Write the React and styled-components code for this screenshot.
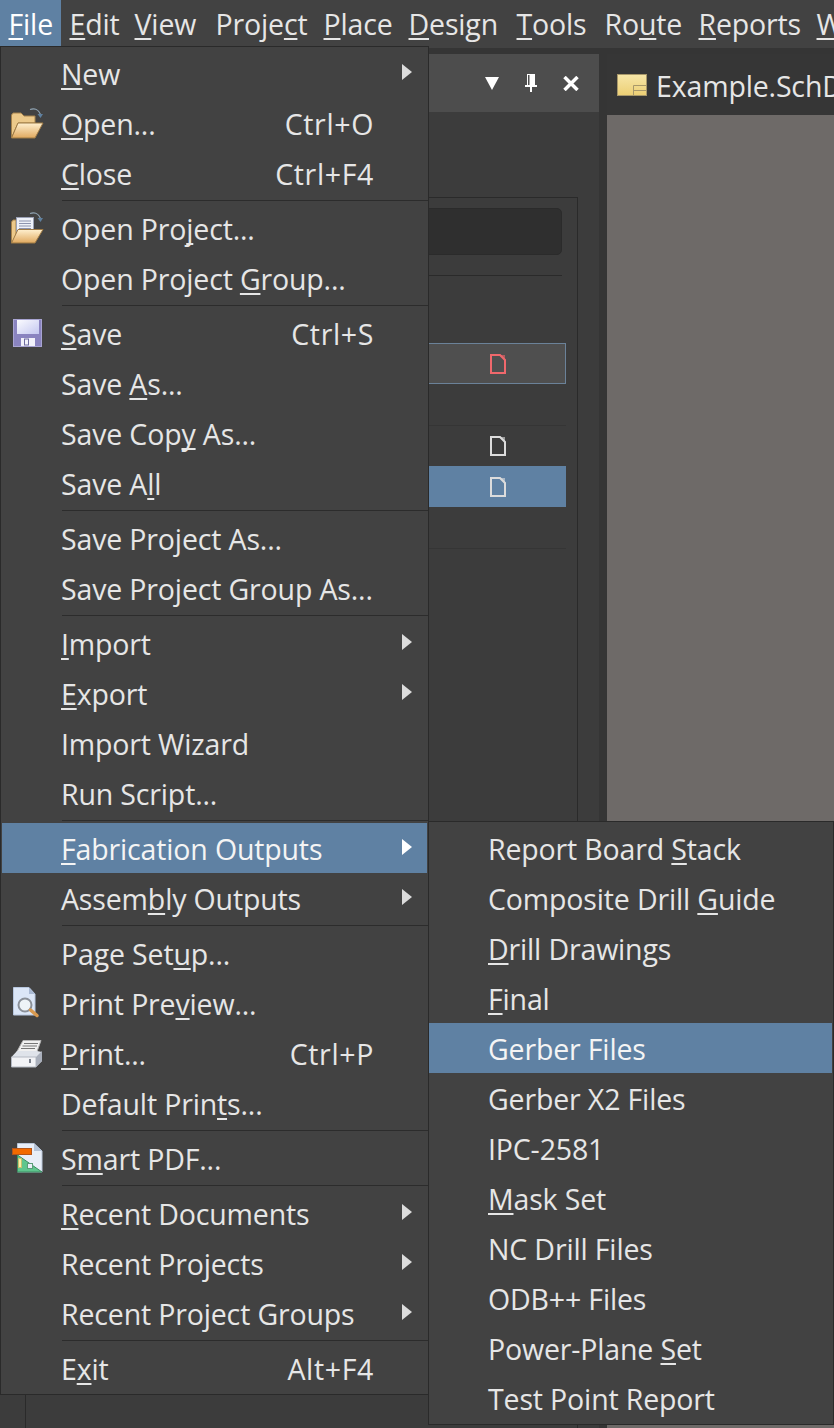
import React from "react";
import styled, { createGlobalStyle } from "styled-components";

const Global = createGlobalStyle`
  html, body { margin: 0; padding: 0; background: #353535; }
  body { width: 834px; height: 1428px; overflow: hidden; }
`;

const Frame = styled.div`
  position: relative; width: 834px; height: 1428px; overflow: hidden;
  display: flex; flex-direction: column; background: #353535;
  font-family: "Open Sans", "Noto Sans", sans-serif; font-size: 28.5px; letter-spacing: -0.15px; color: #e6e6e6;
  u { text-decoration: underline; text-decoration-thickness: 1.5px; text-underline-offset: 3px; text-decoration-skip-ink: none; }
`;
const MenuBar = styled.div`
  display: flex; height: 48px; flex: none; background: #424242; white-space: nowrap;
`;
const BarItem = styled.div`
  height: 46px; box-sizing: border-box; padding: 3px 0 0 8.5px; width: ${p => p.$w}px; flex: none;
  background: ${p => (p.$active ? "#5f81a3" : "transparent")}; line-height: 42px; color: ${p => (p.$active ? "#fff" : "#e6e6e6")};
`;
const Work = styled.div`
  flex: 1; display: flex; padding-top: 6px; min-height: 0;
`;
const Panel = styled.div`
  width: 599px; flex: none; display: flex; flex-direction: column; background: #3c3c3c;
`;
const PanelHead = styled.div`
  height: 58px; flex: none; background: #4d4d4d; display: flex; align-items: center; justify-content: flex-end; padding-right: 20px; gap: 26px;
  svg { display: block; }
`;
const PanelBody = styled.div`
  flex: 1; padding: 85px 21px 0 25px; display: flex; min-height: 0;
`;
const Box = styled.div`
  flex: 1; box-sizing: border-box; border: 1px solid #2a2a2a; border-bottom: 0; padding: 10px 11px 0 0; display: flex; flex-direction: column;
`;
const SearchField = styled.div`
  height: 47px; flex: none; box-sizing: border-box; margin-right: 4px; background: #2f2f2f; border: 1px solid #2b2b2b; border-radius: 5px;
`;
const Rule = styled.div`
  height: 1px; flex: none; margin: 20px 4px 67px 0; background: #2a2a2a;
`;
const TreeRow = styled.div`
  height: ${p => p.$h}px; box-sizing: border-box; flex: none; display: flex; align-items: center; justify-content: flex-end; padding-right: ${p => (p.$framed ? 59 : 60)}px;
  background: ${p => p.$bg || "transparent"}; border: ${p => (p.$framed ? "1px solid #6b8299" : "0")};
  margin-bottom: ${p => p.$mb || 0}px;
`;
const TreeLine = styled.div`
  height: 1px; flex: none; background: #353535;
`;
const DocArea = styled.div`
  flex: 1; margin-left: 8px; display: flex; flex-direction: column; min-width: 0;
`;
const Tab = styled.div`
  height: 61px; flex: none; display: flex; align-items: center; gap: 9px; padding-left: 10px; white-space: nowrap; overflow: hidden; background: #363636;
`;
const TabText = styled.span`
  padding-top: 3px;
`;
const Canvas = styled.div`
  flex: 1; background: #6e6a68;
`;
const Menu = styled.div`
  position: absolute; box-sizing: border-box; left: ${p => p.$x}px; top: ${p => p.$y}px; width: ${p => p.$w}px;
  background: #424242; border: 1px solid #2a2a2a; padding: ${p => p.$pad};
  z-index: ${p => p.$z};
  white-space: nowrap;
`;
const Row = styled.div`
  position: relative; height: 50px; display: flex; align-items: center; box-sizing: border-box;
  padding-left: ${p => p.$indent}px; padding-top: 1px;
  background: ${p => (p.$active ? "#5f81a3" : "transparent")};
  color: ${p => (p.$active ? "#f4f4f4" : "#e6e6e6")};
`;
const IconSlot = styled.span`
  position: absolute; left: 8px; top: 6px; width: 36px; height: 36px;
  svg { display: block; }
`;
const Shortcut = styled.span`
  position: absolute; right: 53px; top: 3px; line-height: 47px; letter-spacing: 0.65px;
`;
const Arrow = styled.span`
  position: absolute; left: 400px; top: 16px; width: 0; height: 0;
  border-left: 10px solid ${p => (p.$active ? "#fff" : "#dcdcdc")}; border-top: 8.5px solid transparent; border-bottom: 8.5px solid transparent;
`;
const Sep = styled.div`
  height: 5px; display: flex; align-items: center; padding-left: 60px; margin-right: -1px;
  &::after { content: ""; flex: 1; height: 1.5px; background: #2c2c2c; }
`;

const DocIcon = ({ color }) => (
  <svg width="16" height="20" viewBox="0 0 16 20" fill="none">
    <path d="M1 1H10L15 6V19H1Z" stroke={color} strokeWidth="2" />
    <path d="M10 1L15 6V1Z" fill={color} opacity=".6" />
  </svg>
);
const CurveArrow = ({ y = 0 }) => (
  <g fill="none" transform={`translate(0 ${y})`}>
    <path d="M20 5.500C25 4 29 6 30.500 10.500" stroke="#8fa3b2" strokeWidth="1.300" />
    <path d="M27.500 10H33L30.500 14Z" fill="#5e7f9e" />
  </g>
);
const Grad = ({ id }) => (
  <defs>
    <linearGradient id={id} x1="0" y1="0" x2="0" y2="1">
      <stop offset="0" stopColor="#fff0cf" />
      <stop offset="1" stopColor="#e0a95f" />
    </linearGradient>
  </defs>
);
const OpenIcon = () => (
  <svg width="36" height="36" viewBox="0 0 36 36">
    <Grad id="fo" />
    <CurveArrow />
    <path d="M1.500 34V11L3 9H11L14 12H25V19H8Z" fill="#ecc98a" stroke="#a5824c" strokeWidth="1" />
    <path d="M8 19H33L25 34H1.500Z" fill="url(#fo)" stroke="#9e7a45" strokeWidth="1" />
  </svg>
);
const OpenProjectIcon = () => (
  <svg width="36" height="36" viewBox="0 0 36 36">
    <Grad id="fp" />
    <CurveArrow y={-1} />
    <path d="M1.500 34V13L3 11H6V30Z" fill="#ecc98a" stroke="#a5824c" strokeWidth="1" />
    <rect x="6.500" y="8.500" width="17" height="16" fill="#eef1f8" stroke="#9aa0b4" strokeWidth="1" />
    <path d="M9 12H21M9 14.500H21M9 17H21M9 19.500H21" stroke="#8d93ae" strokeWidth="1" />
    <path d="M8 20.500H33L25 34H1.500Z" fill="url(#fp)" stroke="#9e7a45" strokeWidth="1" />
  </svg>
);
const SaveIcon = () => (
  <svg width="36" height="36" viewBox="0 0 36 36">
    <defs><linearGradient id="sv" x1="0" y1="0" x2="1" y2="1"><stop offset="0" stopColor="#fbfbff" /><stop offset="1" stopColor="#c4c8f0" /></linearGradient></defs>
    <rect x="3.500" y="5.500" width="28" height="27" fill="#8a84c0" stroke="#a8a4d2" strokeWidth="1" />
    <rect x="7" y="6" width="22" height="14" fill="url(#sv)" />
    <rect x="11" y="24" width="14" height="8" fill="#f2f2fb" />
    <rect x="14.500" y="25" width="4" height="6" fill="none" stroke="#6f6ca0" strokeWidth="1" />
  </svg>
);
const PreviewIcon = () => (
  <svg width="36" height="36" viewBox="0 0 36 36">
    <path d="M3.500 3.500H19L25 10V31H3.500Z" fill="#dbe6f7" stroke="#b7c6de" strokeWidth="1" />
    <path d="M19 3.500V10H25Z" fill="#a9b9d3" />
    <circle cx="15" cy="21" r="6.500" fill="#eef3f7" stroke="#8a9099" strokeWidth="2" />
    <path d="M20.500 26L27 31.500" stroke="#d99a50" strokeWidth="3.500" strokeLinecap="round" />
  </svg>
);
const PrintIcon = () => (
  <svg width="36" height="36" viewBox="0 0 36 36">
    <path d="M13 6.500H31L27 17.500H7Z" fill="#f0f0f0" stroke="#b4b4b4" strokeWidth="1" />
    <path d="M14 9.500H28M12.500 12H27M11 14.500H25" stroke="#777" strokeWidth="1" />
    <path d="M7 17H27L32 18V27L26 33H1.500V23Z" fill="#dfe3ea" />
    <path d="M1.500 23H26V33H1.500Z" fill="#f2f3f6" stroke="#b3b8c2" strokeWidth="1" />
    <path d="M26 23L32 17V27L26 33Z" fill="#a9afbb" />
    <rect x="19" y="25" width="2" height="4" fill="#7a808c" />
  </svg>
);
const PdfIcon = () => (
  <svg width="36" height="36" viewBox="0 0 36 36">
    <path d="M7.500 4.500H24L32 12V33H7.500Z" fill="#e8eef8" stroke="#b9c6d8" strokeWidth="1" />
    <path d="M24 4.500V12H32Z" fill="#b6c4d8" />
    <path d="M7.500 33V16L32 33Z" fill="#5fc68e" stroke="#3c8d62" strokeWidth="1" />
    <rect x="2.500" y="9.500" width="19" height="6" fill="#f26a00" stroke="#b4561a" strokeWidth="1" />
    <rect x="8.500" y="19.500" width="3" height="9" fill="#f8f2a8" stroke="#c9c070" strokeWidth="1" />
    <rect x="17.500" y="24.500" width="5" height="5" fill="#e8eef8" stroke="#5a9c78" strokeWidth="1" />
  </svg>
);

const label = s => {
  const i = s.indexOf("&");
  if (i < 0) return s;
  return (<>{s.slice(0, i)}<u>{s[i + 1]}</u>{s.slice(i + 2)}</>);
};

const S = "sep";
const MAIN = [
  { t: "&New", arrow: true },
  { t: "&Open...", k: "Ctrl+O", icon: <OpenIcon /> },
  { t: "&Close", k: "Ctrl+F4" }, S,
  { t: "Open Pro&ject...", icon: <OpenProjectIcon /> },
  { t: "Open Project &Group..." }, S,
  { t: "&Save", k: "Ctrl+S", icon: <SaveIcon /> },
  { t: "Save &As..." },
  { t: "Save Cop&y As..." },
  { t: "Save A&ll" }, S,
  { t: "Save Project As..." },
  { t: "Save Project Group As..." }, S,
  { t: "&Import", arrow: true },
  { t: "&Export", arrow: true },
  { t: "Import Wizard" },
  { t: "Run Script..." }, S,
  { t: "&Fabrication Outputs", arrow: true, active: true },
  { t: "Assem&bly Outputs", arrow: true }, S,
  { t: "Page Set&up..." },
  { t: "Print Pre&view...", icon: <PreviewIcon /> },
  { t: "&Print...", k: "Ctrl+P", icon: <PrintIcon /> },
  { t: "Default Prin&ts..." }, S,
  { t: "S&mart PDF...", icon: <PdfIcon /> }, S,
  { t: "&Recent Documents", arrow: true },
  { t: "Recent Projects", arrow: true },
  { t: "Recent Project Groups", arrow: true }, S,
  { t: "E&xit", k: "Alt+F4" },
];
const SUB = [
  { t: "Report Board &Stack" },
  { t: "Composite Drill &Guide" },
  { t: "&Drill Drawings" },
  { t: "&Final" },
  { t: "Gerber Files", active: true },
  { t: "Gerber X2 Files" },
  { t: "IPC-2581" },
  { t: "&Mask Set" },
  { t: "NC Drill Files" },
  { t: "ODB++ Files" },
  { t: "Power-Plane &Set" },
  { t: "Test Point Report" },
];
const BAR = [
  ["&File", 61, true], ["&Edit", 65], ["&View", 81], ["Proje&ct", 108], ["&Place", 85],
  ["&Design", 108], ["&Tools", 88], ["Ro&ute", 94], ["&Reports", 118], ["&Window", 90],
];

export default function App() {
  return (
    <Frame>
      <Global />
      <MenuBar>
        {BAR.map(([t, w, active]) => (
          <BarItem key={t} $w={w} $active={active}>{label(t)}</BarItem>
        ))}
      </MenuBar>
      <Work>
        <Panel>
          <PanelHead>
            <svg width="14" height="13" viewBox="0 0 14 13"><path d="M0 0H14L7 13Z" fill="#fff" /></svg>
            <svg width="12" height="18" viewBox="0 0 12 18"><path d="M2 0H10V11H12V13H7V18H5V13H0V11H2Z" fill="#fff" /><rect x="3" y="1" width="1.500" height="10" fill="#4d4d4d" /></svg>
            <svg width="16" height="15" viewBox="0 0 16 15"><path d="M1.500 1L14.500 14M14.500 1L1.500 14" stroke="#fff" strokeWidth="3.500" /></svg>
          </PanelHead>
          <PanelBody>
            <Box>
              <SearchField />
              <Rule />
              <TreeRow $h={41} $bg="#4f4f4f" $framed $mb={41}><DocIcon color="#f0686c" /></TreeRow>
              <TreeLine />
              <TreeRow $h={40}><DocIcon color="#dcdcdc" /></TreeRow>
              <TreeRow $h={41} $bg="#5f81a3" $mb={41}><DocIcon color="#dcdcdc" /></TreeRow>
              <TreeLine />
            </Box>
          </PanelBody>
        </Panel>
        <DocArea>
          <Tab>
            <svg width="30" height="22" viewBox="0 0 30 22" style={{ flex: "none" }}>
              <defs><linearGradient id="tb" x1="0" y1="0" x2="0" y2="1"><stop offset="0" stopColor="#f7e6a8" /><stop offset="1" stopColor="#eccf74" /></linearGradient></defs>
              <rect x=".5" y=".5" width="29" height="21" fill="url(#tb)" stroke="#a8986a" />
              <path d="M16.500 21.500V11.500H29.500M17 16.500H29.500" fill="none" stroke="#a8986a" />
            </svg>
            <TabText>Example.SchDoc</TabText>
          </Tab>
          <Canvas />
        </DocArea>
      </Work>
      <Menu $x={0} $y={46} $w={429} $z={2} $pad="1px 1px 1px 1px">
        {MAIN.map((m, i) => m === S ? <Sep key={i} /> : (
          <Row key={i} $indent={59} $active={m.active}>
            {m.icon && <IconSlot>{m.icon}</IconSlot>}
            <span>{label(m.t)}</span>
            {m.k && <Shortcut>{m.k}</Shortcut>}
            {m.arrow && <Arrow $active={m.active} />}
          </Row>
        ))}
      </Menu>
      <Menu $x={428} $y={821} $w={406} $z={3} $pad="1px 1px 1px 0">
        {SUB.map((m, i) => (
          <Row key={i} $indent={59} $active={m.active}>
            <span>{label(m.t)}</span>
          </Row>
        ))}
      </Menu>
    </Frame>
  );
}
